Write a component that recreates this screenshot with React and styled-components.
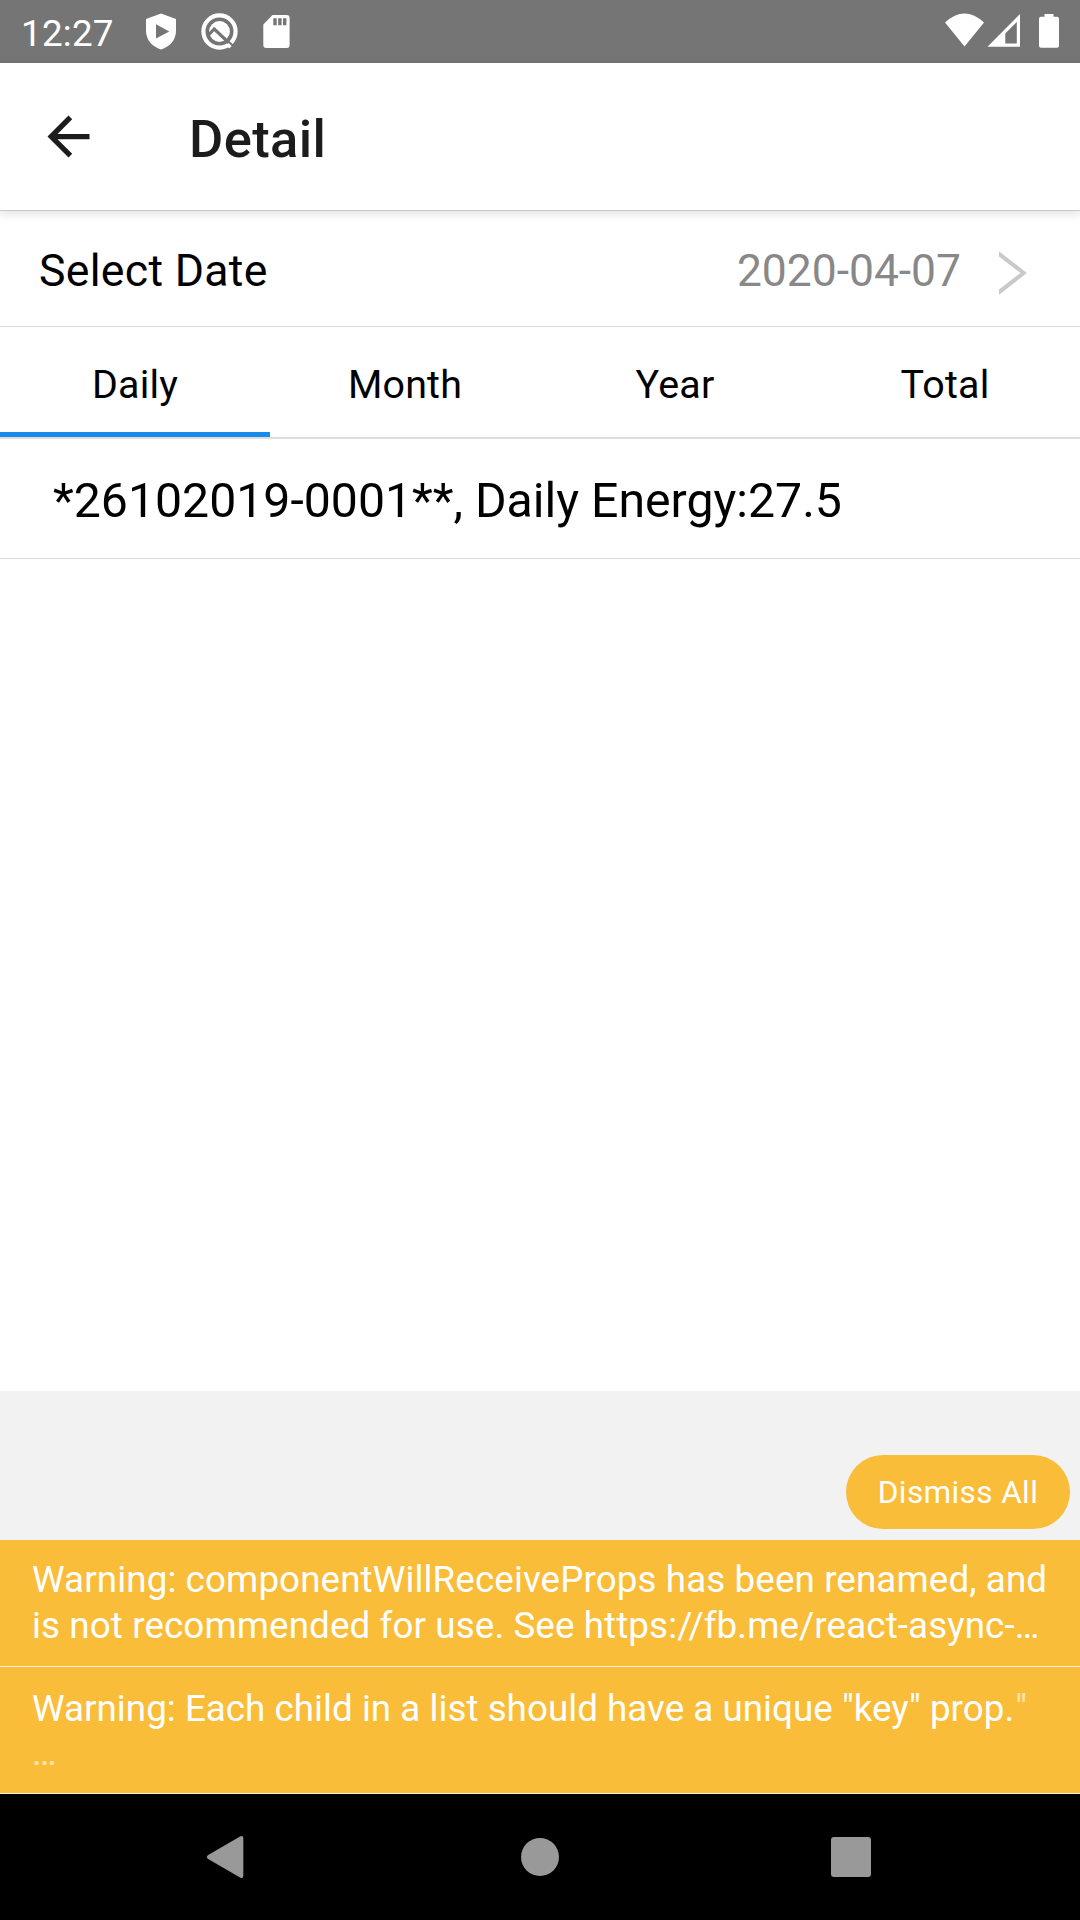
import React from 'react';
import styled, { createGlobalStyle } from 'styled-components';

const tabs = ['Daily', 'Month', 'Year', 'Total'];

export default function App() {
  return (
    <Screen>
      <GlobalStyle />
      <StatusBar>
        <Clock>12:27</Clock>
        <Notifications>
          <ProtectIcon />
          <SearchIcon />
          <SdCardIcon />
        </Notifications>
        <SystemIcons />
      </StatusBar>

      <Header>
        <BackButton aria-label="Back">
          <svg width="63" height="63" viewBox="0 0 24 24" fill="#1c1c1c">
            <path d="M20 11H7.83l5.59-5.59L12 4l-8 8 8 8 1.41-1.41L7.83 13H20v-2z" />
          </svg>
        </BackButton>
        <Title>Detail</Title>
      </Header>

      <DateRow>
        <DateLabel>Select Date</DateLabel>
        <DateValue>2020-04-07</DateValue>
        <Chevron width="28" height="44" viewBox="0 0 28 44">
          <path d="M-2 1.3L24.6 22L-2 42.7" fill="none" stroke="#c9c9c9" strokeWidth="4" />
        </Chevron>
      </DateRow>

      <Tabs>
        {tabs.map((tab, i) => (
          <Tab key={tab} $active={i === 0}>
            {tab}
          </Tab>
        ))}
      </Tabs>

      <EnergyRow>*26102019-0001**, Daily Energy:27.5</EnergyRow>
      <Blank />

      <DismissArea>
        <DismissButton>Dismiss All</DismissButton>
      </DismissArea>
      <Warning $top={17} $line={46} $spacing={0.11}>
        <div>Warning: componentWillReceiveProps has been renamed, and</div>
        <div>is not recommended for use. See https://fb.me/react-async-…</div>
      </Warning>
      <Warning $top={20} $line={44} $spacing={0.03}>
        <div>
          Warning: Each child in a list should have a unique "key" prop.
          <Substitution $gap={1}>"</Substitution>
        </div>
        <Substitution>…</Substitution>
      </Warning>

      <NavBar>
        <svg width="43" height="46" viewBox="0 0 43 46" fill="#999">
          <path d="M34 2.6Q37.3 0.7 37.3 4V42Q37.3 45.3 34 43.4L2.2 25Q-0.6 23 2.2 21Z" />
        </svg>
        <HomeKey />
        <RecentsKey />
      </NavBar>
    </Screen>
  );
}

function ProtectIcon() {
  return (
    <svg width="30" height="37" viewBox="0 0 30 37">
      <path d="M15 0.5L30 6V17.5C30 27 24 33.5 15 36.5C6 33.5 0 27 0 17.5V6Z" fill="#fff" />
      <path d="M10 11.3L23.3 18.4L10 25.5Z" fill="#757575" />
    </svg>
  );
}

function SearchIcon() {
  return (
    <svg width="37" height="37" viewBox="0 0 37 37" fill="none">
      <circle cx="18.5" cy="18.5" r="16.1" stroke="#fff" strokeWidth="4.2" />
      <circle cx="18.5" cy="18.5" r="10.4" fill="#fff" />
      <path d="M7.5 22L13.2 16L34 35.5" stroke="#757575" strokeWidth="3.2" />
      <path d="M26.5 31.2L29.5 34.2" stroke="#fff" strokeWidth="3.4" />
    </svg>
  );
}

function SdCardIcon() {
  return (
    <svg width="27" height="33" viewBox="0 0 27 33">
      <path
        d="M9.5 0H23.8Q26.6 0 26.6 3V30Q26.6 33 23.8 33H3.2Q0.3 33 0.3 30V9.6Z"
        fill="#fff"
      />
      <path d="M10.3 3.3h3.4v7h-3.4zM15.2 3.3h3.4v7h-3.4zM20 3.3h3.4v7h-3.4z" fill="#757575" />
    </svg>
  );
}

// wifi, mobile signal and battery share one strip
function SystemIcons() {
  return (
    <SystemSvg width="115" height="36" viewBox="0 0 115 36" fill="#fff">
      <path d="M0 9.5Q19.5 -8.5 39 9.5L19.5 33.5Z" />
      <path fillRule="evenodd" d="M42.5 33.7L75 1V33.7ZM60.3 30.5H71.8V9L60.3 20.5Z" />
      <path d="M99.5 1H108.5V3.7H112Q114 3.7 114 5.8V32.8Q114 34.8 112 34.8H96Q94 34.8 94 32.8V5.8Q94 3.7 96 3.7H99.5Z" />
    </SystemSvg>
  );
}

const GlobalStyle = createGlobalStyle`
  body {
    margin: 0;
    background: #fff;
  }
  * {
    box-sizing: border-box;
  }
  svg {
    display: block;
    flex: none;
  }
`;

const Screen = styled.div`
  display: flex;
  flex-direction: column;
  width: 1080px;
  height: 1920px;
  overflow: hidden;
  background: #fff;
  color: #000;
  font-family: Roboto, sans-serif;
`;

const StatusBar = styled.div`
  display: flex;
  align-items: flex-start;
  flex: none;
  height: 63px;
  padding: 0 20px 0 21px;
  background: #757575;
  color: #fff;
`;
const Clock = styled.span`
  width: 125px;
  padding-top: 12px;
  font-size: 36.75px;
  letter-spacing: 0.25px;
  line-height: 43px;
`;
const Notifications = styled.div`
  display: flex;
  align-items: center;
  gap: 25px;
  padding-top: 13px;
`;
const SystemSvg = styled.svg`
  margin: 13px 0 0 auto;
`;

const Header = styled.header`
  display: flex;
  align-items: center;
  flex: none;
  height: 147px;
  padding-left: 36.5px;
  border-bottom: 1px solid transparent;
  box-shadow: 0 1px 0 #c9c9c9, 0 3px 9px 1px rgba(0, 0, 0, 0.12);
`;
const BackButton = styled.button`
  padding: 0;
  border: 0;
  background: none;
`;
const Title = styled.h1`
  margin: 5px 0 0 89.5px;
  color: #1c1c1c;
  font-size: 52.5px;
  font-weight: 500;
  letter-spacing: 0.4px;
`;

const DateRow = styled.div`
  display: flex;
  align-items: center;
  flex: none;
  height: 117px;
  padding: 6px 53px 0 39px;
  border-bottom: 1px solid #ddd;
  font-size: 44.6px;
`;
const DateLabel = styled.span`
  letter-spacing: 0.3px;
`;
const DateValue = styled.span`
  margin-left: auto;
  color: #888;
  font-size: 44.4px;
`;
const Chevron = styled.svg`
  margin: 3px 0 0 38px;
`;

const Tabs = styled.nav`
  display: flex;
  flex: none;
  height: 112px;
  border-bottom: 2px solid #ddd;
`;
const Tab = styled.div`
  flex: 1;
  height: 110px;
  border-bottom: 5px solid ${props => (props.$active ? '#188be8' : 'transparent')};
  font-size: 39.4px;
  letter-spacing: 0.2px;
  line-height: 116px;
  text-align: center;
`;

const EnergyRow = styled.div`
  flex: none;
  height: 120px;
  padding-left: 53px;
  border-bottom: 1px solid #ddd;
  font-size: 48.2px;
  line-height: 124px;
`;
const Blank = styled.div`
  flex: 1;
`;

const DismissArea = styled.div`
  display: flex;
  align-items: flex-end;
  justify-content: flex-end;
  flex: none;
  height: 149px;
  padding: 0 10px 11px;
  background: #f2f2f2;
`;
const DismissButton = styled.button`
  width: 224px;
  height: 74px;
  padding: 0;
  border: 0;
  border-radius: 37px;
  background: #fabd39;
  color: #fff;
  font-family: inherit;
  font-size: 31.5px;
  letter-spacing: 0.4px;
`;

const Warning = styled.div`
  flex: none;
  height: 127px;
  padding: ${props => props.$top}px 0 0 32px;
  border-bottom: 1px solid #fdf3d8;
  background: #fabd39;
  color: #fff;
  font-size: 36.75px;
  letter-spacing: ${props => props.$spacing}px;
  line-height: ${props => props.$line}px;
  white-space: nowrap;
`;
const Substitution = styled.span`
  margin-left: ${props => props.$gap || 0}px;
  opacity: 0.6;
`;

const NavBar = styled.div`
  display: flex;
  align-items: center;
  justify-content: space-between;
  flex: none;
  height: 126px;
  padding: 0 209px 0 206px;
  background: #000;
`;
const HomeKey = styled.div`
  width: 38px;
  height: 38px;
  border-radius: 50%;
  background: #999;
`;
const RecentsKey = styled.div`
  width: 40px;
  height: 40px;
  border-radius: 3px;
  background: #999;
`;
